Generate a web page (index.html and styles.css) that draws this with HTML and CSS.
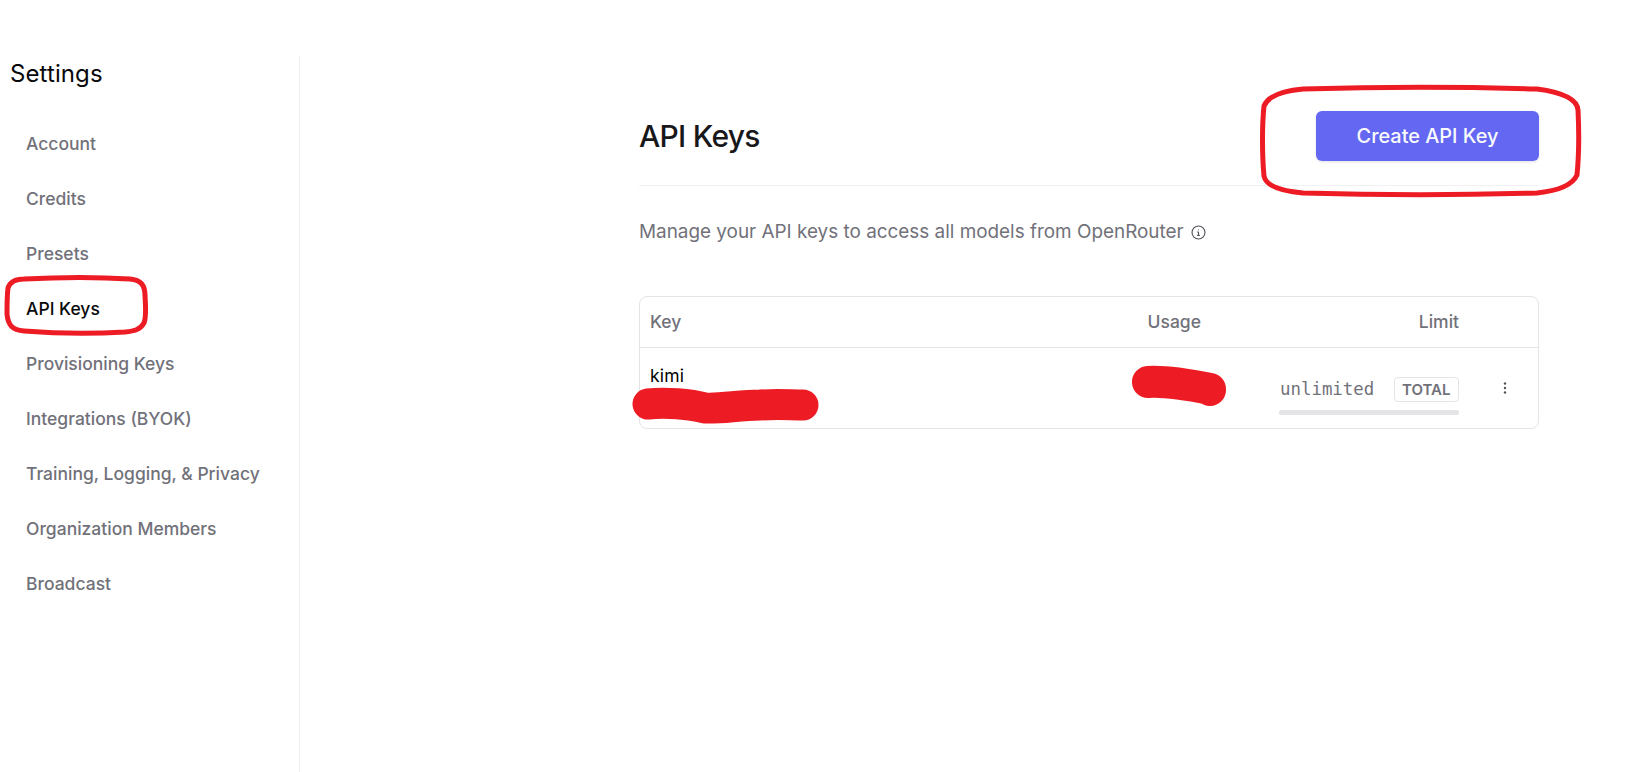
FILE: index.html
```html
<!DOCTYPE html>
<html lang="en">
<head>
<meta charset="utf-8">
<title>API Keys</title>
<link rel="stylesheet" href="styles.css">
</head>
<body>
<div class="page">
  <aside class="sidebar">
    <h2 class="sidebar-title">Settings</h2>
    <nav class="nav">
      <a class="nav-item">Account</a>
      <a class="nav-item">Credits</a>
      <a class="nav-item">Presets</a>
      <a class="nav-item active">API Keys</a>
      <a class="nav-item">Provisioning Keys</a>
      <a class="nav-item">Integrations (BYOK)</a>
      <a class="nav-item">Training, Logging, &amp; Privacy</a>
      <a class="nav-item">Organization Members</a>
      <a class="nav-item">Broadcast</a>
    </nav>
  </aside>
  <main class="main">
    <div class="content">
      <header class="header">
        <h1 class="title">API Keys</h1>
        <button class="primary">Create API Key</button>
      </header>
      <p class="desc">Manage your API keys to access all models from OpenRouter
        <svg class="info" viewBox="0 0 16 16" fill="none" stroke="currentColor" stroke-width="1.2" stroke-linecap="round"><circle cx="8" cy="8" r="6.9"/><path d="M8 7.4v3.6M7 7.4h1M7 11h2"/><circle cx="8" cy="5" r=".6" fill="currentColor" stroke="none"/></svg>
      </p>
      <section class="table">
        <div class="row head">
          <div class="cell-key">Key</div>
          <div class="cell-usage">Usage</div>
          <div class="cell-limit">Limit</div>
          <div></div>
        </div>
        <div class="row body">
          <div class="cell-key name">kimi</div>
          <div class="cell-usage"></div>
          <div class="limit-box">
            <div class="limit-line">
              <span class="mono">unlimited</span>
              <span class="badge">TOTAL</span>
            </div>
            <div class="bar"></div>
          </div>
          <div class="menu">
            <svg class="dots" viewBox="0 0 4 14" fill="currentColor"><circle cx="2" cy="2.5" r="1.2"/><circle cx="2" cy="7" r="1.2"/><circle cx="2" cy="11.5" r="1.2"/></svg>
          </div>
        </div>
      </section>
    </div>
  </main>
</div>
<svg class="marks" viewBox="0 0 1646 772" fill="none" stroke="#ed1c24" stroke-linecap="round" stroke-linejoin="round">
  <path stroke-width="5" d="M24 279 C60 277 100 277 130 279 C141 280 145 285 145 296 C146 310 146 318 144 323 C140 330 134 331 125 332 C90 334 50 333 24 331 C12 330 8 325 7 314 C7 305 7 295 8 288 C10 282 16 279 24 279Z"/>
  <path stroke-width="5" d="M1303 89 C1370 87 1470 87 1537 89 C1560 92 1577 98 1578 110 C1579 130 1579 155 1577 175 C1572 186 1556 191 1537 193 C1470 195 1370 195 1303 193 C1280 191 1266 186 1264 176 C1262 155 1262 125 1264 106 C1268 96 1282 91 1303 89Z"/>
  <path stroke-width="31" d="M648 404 C665 402 690 404 705 408 C720 409 740 405 760 405 C780 404 790 405 803 405"/>
  <path stroke-width="32" d="M1148 382 C1165 381 1195 386 1210 389 L1210 390"/>
</svg>
</body>
</html>
```

FILE: styles.css
```css
* { box-sizing: border-box; }
html, body { margin: 0; height: 100%; background: #fff; }
body {
  font-family: Inter, "Liberation Sans", sans-serif;
  color: #09090b;
  overflow: hidden;
}
.page { display: flex; height: 772px; }
.sidebar {
  width: 300px;
  flex: none;
  margin-top: 56px;
  padding-left: 10px;
  border-right: 1px solid #f1f1f3;
}
.sidebar-title {
  margin: 0;
  font-size: 24px;
  line-height: 32px;
  font-weight: 400;
  letter-spacing: 0.1px;
  padding-top: 2px;
}
.nav { display: flex; flex-direction: column; margin-top: 26px; }
.nav-item {
  height: 55px;
  padding-left: 16px;
  display: flex;
  align-items: center;
  font-size: 17.5px;
  font-weight: 500;
  color: #71717a;
}
.nav-item.active { color: #09090b; }
.main { flex: 1; padding: 111px 107px 0 339px; }
.content { width: 900px; }
.header {
  display: flex;
  justify-content: space-between;
  align-items: center;
  padding-bottom: 24px;
  border-bottom: 1px solid #f1f1f3;
}
.title { margin: 0; font-size: 30px; font-weight: 500; line-height: 36px; letter-spacing: -0.75px; color: #18181b; }
.primary {
  width: 223px;
  height: 50px;
  border: 0;
  border-radius: 6px;
  background: #6467f2;
  color: #f8fafc;
  font: 500 19.9px Inter, "Liberation Sans", sans-serif;
  box-shadow: 0 1px 3px rgba(0,0,0,.12);
}
.desc {
  margin: 32px 0 50px;
  font-size: 18.9px;
  line-height: 28px;
  color: #71717a;
  display: flex;
  align-items: center;
  gap: 7px;
}
.info { width: 15px; height: 15px; color: #52525b; }
.table { border: 1px solid #e4e4e7; border-radius: 8px; }
.row {
  display: grid;
  grid-template-columns: 1fr 100px 258px 80px;
  align-items: center;
}
.row.head { height: 51px; padding-bottom: 2px; border-bottom: 1px solid #e4e4e7; font-size: 17.5px; font-weight: 500; color: #71717a; }
.row.body { height: 80px; }
.cell-key { padding-left: 10px; }
.cell-usage { text-align: right; margin-right: -1px; }
.cell-limit { text-align: right; margin-right: -1px; }
.name { font-size: 17.5px; color: #000; align-self: start; padding-top: 18px; line-height: 20px; letter-spacing: 0.2px; }
.limit-box { justify-self: end; width: 180px; padding-top: 15px; margin-right: -1px; }
.limit-line { display: flex; justify-content: space-between; align-items: center; }
.mono { font-family: "DejaVu Sans Mono", "Liberation Mono", monospace; font-size: 17.4px; color: #71717a; padding-left: 1px; }
.badge {
  border: 1px solid #e4e4e7;
  border-radius: 4px;
  padding: 0 7.5px;
  height: 25px;
  line-height: 23px;
  font-size: 15px;
  font-weight: 600;
  color: #71717a;
}
.bar { height: 5px; margin-top: 8px; border-radius: 3px; background: #e4e4e7; }
.menu { display: flex; justify-content: center; padding-left: 13px; color: #52525b; }
.dots { width: 4px; height: 14px; }
.marks { position: absolute; left: 0; top: 0; width: 1646px; height: 772px; pointer-events: none; }
```
